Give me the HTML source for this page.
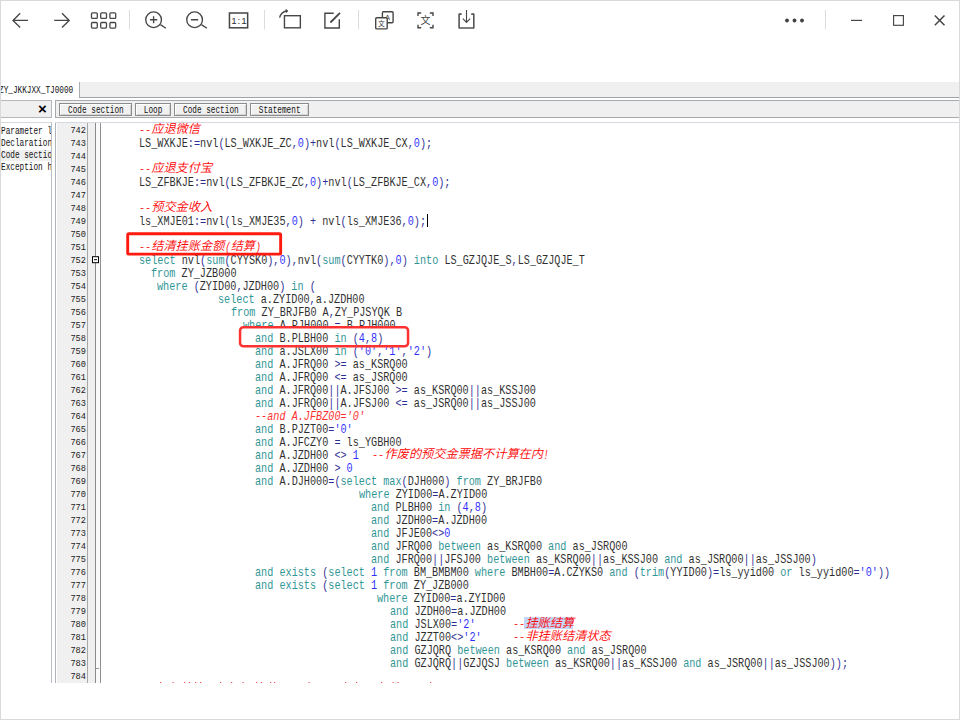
<!DOCTYPE html>
<html lang="zh-CN">
<head>
<meta charset="utf-8">
<title>ZY_JKKJXX_TJ0000</title>
<style>
html,body{margin:0;padding:0;background:#fff;}
body{width:960px;height:720px;position:relative;overflow:hidden;font-family:"Liberation Mono","Noto Serif CJK SC",monospace;color:#000;}
#frame{position:absolute;left:0;top:0;width:958px;height:718px;border:1px solid #d9d9d9;pointer-events:none;z-index:50;}
#tb{position:absolute;left:0;top:0;}
/* tab strip */
#tabbg{position:absolute;left:79px;top:82px;width:880px;height:16px;background:#f0f0f0;border-left:1px solid #a9adb3;border-bottom:1px solid #a0a3a8;box-sizing:border-box;}
#tabtxt{position:absolute;left:-0.9px;top:85.2px;height:12px;line-height:12px;font-size:10px;white-space:pre;transform:scaleX(.773);transform-origin:0 0;color:#111;}
/* second strip */
#xbar{position:absolute;left:0;top:100px;width:52px;height:18px;box-sizing:border-box;background:#f0f0f0;border:1px solid #b4b7bc;border-left:none;}
#xbar span{position:absolute;left:36.5px;top:-0.7px;width:12px;text-align:center;font:bold 15px/18px "Liberation Sans",sans-serif;color:#000;}
#crumb{position:absolute;left:55px;top:100px;width:904px;height:18px;box-sizing:border-box;background:#f0f0f0;border:1px solid #a6a9ae;border-right:none;}
.btn{position:absolute;top:2px;height:13px;box-sizing:border-box;border:1px solid #8c8c8c;background:#f1f1f1;box-shadow:inset 1px 1px 0 #fff, inset -1px -1px 0 #d4d4d4;}
.btn span{position:absolute;left:0;width:100%;text-align:center;top:1.2px;height:11px;line-height:11px;font-size:10px;white-space:pre;transform:scaleX(.773);transform-origin:50% 0;color:#111;}
/* left list */
#left{position:absolute;left:0;top:122px;width:52px;height:561px;box-sizing:border-box;border-top:1px solid #d5d8de;border-right:1px solid #b9bdc6;background:#fff;overflow:hidden;}
#left div{position:absolute;left:1px;height:12px;line-height:12px;font-size:10px;white-space:pre;transform:scaleX(.773);transform-origin:0 0;color:#111;}
#left .sel{left:0;width:51px;height:11px;top:27px;background:#efefef;transform:none;}
/* editor */
#ed{position:absolute;left:55px;top:122px;width:904px;height:561px;box-sizing:border-box;border-top:1px solid #d5d8de;overflow:hidden;background:#fff;}
#gut{position:absolute;left:0;top:0;width:33px;height:561px;box-sizing:border-box;border-left:1px solid #aeb2bb;border-right:1px solid #a8a8a8;background:linear-gradient(90deg,#fff 0,#fff 1px,#f0f0f0 1px);}
#fold{position:absolute;left:33px;top:0;width:13px;height:561px;box-sizing:border-box;background:linear-gradient(90deg,#f0f0f0 0,#f0f0f0 7px,#8a8a8a 7px,#8a8a8a 8px,#fafafa 8px,#fafafa 12px,#8e8e8e 12px);}
.num{position:absolute;left:-39.4px;width:70px;height:13px;line-height:13px;font-size:9.8px;text-align:right;color:#222;transform:scaleX(.884);transform-origin:100% 0;}
#code{position:absolute;left:0;top:0;width:960px;height:683px;overflow:hidden;}
.ln{position:absolute;left:139px;height:13px;line-height:13px;font-size:12.4px;white-space:pre;}
.ln.top{z-index:12;}
.r{position:absolute;top:1.9px;opacity:.82;transform:scaleX(0.8212);transform-origin:0 0;}
.z{position:absolute;top:-1.1px;font-family:"Noto Sans CJK SC","Noto Serif CJK SC",sans-serif;font-style:italic;font-weight:350;color:#f00;font-size:12.2px;}
.c{font-style:italic;color:#f00;}
.k{color:#008080;}
.o{color:#000080;}
.n,.s{color:#00f;}
.box{position:absolute;box-sizing:border-box;background:#fff;z-index:10;}
#hl{position:absolute;left:524.4px;top:616.9px;width:48.7px;height:12.5px;background:#c6d6f6;}
#caret{position:absolute;left:426.6px;top:214.2px;width:1.3px;height:12.6px;background:#000;}
</style>
</head>
<body>
<svg id="tb" width="960" height="60" viewBox="0 0 960 60" fill="none" stroke="#464646" stroke-width="1.35" stroke-linecap="butt" stroke-linejoin="miter">
<!-- back / forward -->
<path d="M28 20.4H13.2M20.2 13.3L13 20.4L20.2 27.5"/>
<path d="M54.2 20.4H69M62 13.3L69.2 20.4L62 27.5"/>
<!-- grid -->
<g stroke-width="1.3"><rect x="91.5" y="12.8" width="5.8" height="5.6" rx="1"/><rect x="100.7" y="12.8" width="5.8" height="5.6" rx="1"/><rect x="109.9" y="12.8" width="5.8" height="5.6" rx="1"/><rect x="91.5" y="22.5" width="5.8" height="5.6" rx="1"/><rect x="100.7" y="22.5" width="5.8" height="5.6" rx="1"/><rect x="109.9" y="22.5" width="5.8" height="5.6" rx="1"/></g>
<path d="M129.5 10V29.6" stroke="#dcdcdc" stroke-width="1"/>
<!-- zoom in -->
<circle cx="153.6" cy="19.75" r="7.85"/><path d="M160.4 24.6L165.9 28.2M150 19.75H157.2M153.6 16.2V23.3"/>
<!-- zoom out -->
<circle cx="194.6" cy="19.75" r="7.85"/><path d="M201.4 24.6L206.9 28.2M191 19.75H198.2"/>
<!-- 1:1 -->
<rect x="229.45" y="13" width="18.2" height="14.8" stroke-width="1.5"/><text x="231.2" y="24" style="font-family:'Liberation Sans',sans-serif;font-size:9.8px;letter-spacing:0.9px" fill="#333" stroke="none">1:1</text>
<path d="M264.5 10V29.6" stroke="#dcdcdc" stroke-width="1"/>
<!-- rotate -->
<rect x="284.45" y="15.7" width="15.9" height="12.1" stroke-width="1.4"/><path d="M279.6 17.7C280.6 14 283 11.6 286.6 11" stroke-width="1.3"/><path d="M285.9 9.5L288 10.9L286.1 12.5Z" fill="#414141" stroke-width=".7"/>
<!-- edit -->
<path d="M333.7 13.2H324.9V28.05H339.3V19.2" stroke-width="1.4"/><path d="M330.4 22.5L340 12.9" stroke-width="1.8"/>
<path d="M358.5 10V29.6" stroke="#dcdcdc" stroke-width="1"/>
<!-- translate -->
<rect x="382.4" y="11.7" width="10.7" height="11.1" rx="1" stroke-width="1.4"/>
<text x="387.5" y="20.4" style="font-family:'Liberation Sans',sans-serif" font-size="7.5" fill="#414141" stroke="none" text-anchor="middle">A</text>
<rect x="375.7" y="17.8" width="11.5" height="11.1" rx="1" fill="#fff" stroke-width="1.4"/>
<text x="381.45" y="26" style="font-family:'Noto Sans CJK SC',sans-serif" font-size="6.8" fill="#414141" stroke="none" text-anchor="middle">文</text>
<!-- ocr -->
<path d="M418 16V13H421.2M429.8 13H433V16M433 24.8V27.8H429.8M421.2 27.8H418V24.8" stroke-width="1.4"/>
<text x="425.4" y="24.3" style="font-family:'Noto Sans CJK SC',sans-serif" font-size="10" fill="#414141" stroke="none" text-anchor="middle">文</text>
<!-- download -->
<path d="M461.7 14.1H459.1V27.95H473.8V14.1H471.2" stroke-width="1.6" stroke="#555" stroke-linejoin="round"/><path d="M466.5 10V22.2M462.9 18.7L466.5 22.4L470.1 18.7" stroke-width="1.1"/>
<!-- more -->
<g fill="#414141" stroke="none"><circle cx="787" cy="20.5" r="1.9"/><circle cx="794.5" cy="20.5" r="1.9"/><circle cx="802" cy="20.5" r="1.9"/></g>
<path d="M825.5 10V29.6" stroke="#dcdcdc" stroke-width="1"/>
<!-- min / max / close -->
<path d="M851 20.4H862" stroke-width="1.2"/>
<rect x="893.6" y="15.6" width="9.8" height="9.7" stroke-width="1.15"/>
<path d="M934.8 15.5L944.5 25.3M944.5 15.5L934.8 25.3" stroke-width="1.5"/>

</svg>

<div id="tabbg"></div>
<div id="tabtxt">ZY_JKKJXX_TJ0000</div>

<div id="xbar"><span>×</span></div>
<div id="crumb">
<div class="btn" style="left:3.2px;width:73.3px"><span>Code section</span></div>
<div class="btn" style="left:79.2px;width:36.2px"><span>Loop</span></div>
<div class="btn" style="left:118.2px;width:72.5px"><span>Code section</span></div>
<div class="btn" style="left:193.5px;width:59.3px"><span>Statement</span></div>
</div>

<div id="left">
<div class="sel"></div>
<div style="top:2.6px">Parameter l</div>
<div style="top:14.9px">Declaration</div>
<div style="top:27.2px">Code sectio</div>
<div style="top:39.4px">Exception h</div>
</div>

<div id="ed">
<div id="gut"></div>
<div id="fold">
<svg width="13" height="561" viewBox="0 0 13 561" style="position:absolute;left:0;top:0"><rect x="4.5" y="133.7" width="6" height="6" fill="#fff" stroke="#000" stroke-width="1"/><path d="M6 136.7H9" stroke="#000" stroke-width="1"/><path d="M8 545.5H11" stroke="#9a9a9a" stroke-width="1"/></svg>
</div>
</div>

<div id="code">
<div id="nums" style="position:absolute;left:55px;top:0;width:33px;height:683px;">
<div class="num" style="top:124.30px">742</div>
<div class="num" style="top:137.29px">743</div>
<div class="num" style="top:150.28px">744</div>
<div class="num" style="top:163.27px">745</div>
<div class="num" style="top:176.26px">746</div>
<div class="num" style="top:189.25px">747</div>
<div class="num" style="top:202.24px">748</div>
<div class="num" style="top:215.23px">749</div>
<div class="num" style="top:228.22px">750</div>
<div class="num" style="top:241.21px">751</div>
<div class="num" style="top:254.20px">752</div>
<div class="num" style="top:267.19px">753</div>
<div class="num" style="top:280.18px">754</div>
<div class="num" style="top:293.17px">755</div>
<div class="num" style="top:306.16px">756</div>
<div class="num" style="top:319.15px">757</div>
<div class="num" style="top:332.14px">758</div>
<div class="num" style="top:345.13px">759</div>
<div class="num" style="top:358.12px">760</div>
<div class="num" style="top:371.11px">761</div>
<div class="num" style="top:384.10px">762</div>
<div class="num" style="top:397.09px">763</div>
<div class="num" style="top:410.08px">764</div>
<div class="num" style="top:423.07px">765</div>
<div class="num" style="top:436.06px">766</div>
<div class="num" style="top:449.05px">767</div>
<div class="num" style="top:462.04px">768</div>
<div class="num" style="top:475.03px">769</div>
<div class="num" style="top:488.02px">770</div>
<div class="num" style="top:501.01px">771</div>
<div class="num" style="top:514.00px">772</div>
<div class="num" style="top:526.99px">773</div>
<div class="num" style="top:539.98px">774</div>
<div class="num" style="top:552.97px">775</div>
<div class="num" style="top:565.96px">776</div>
<div class="num" style="top:578.95px">777</div>
<div class="num" style="top:591.94px">778</div>
<div class="num" style="top:604.93px">779</div>
<div class="num" style="top:617.92px">780</div>
<div class="num" style="top:630.91px">781</div>
<div class="num" style="top:643.90px">782</div>
<div class="num" style="top:656.89px">783</div>
<div class="num" style="top:669.88px">784</div>
</div>
<div id="hl"></div>
<svg class="box" width="960" height="720" viewBox="0 0 960 720" style="left:0;top:0;background:none">
<rect x="127.7" y="233.7" width="152.95" height="20.45" rx="1.2" fill="#fff" stroke="#ff1a0d" stroke-width="2.9"/>
<rect x="240.05" y="327.15" width="168" height="19.2" rx="3.4" fill="#fff" stroke="#ff3232" stroke-width="2.5"/>
</svg>
<div class="ln" style="top:123.40px"><span class="r c" style="left:0.00px">--</span><span class="z" style="left:12.22px">应退微信</span></div>
<div class="ln" style="top:136.39px"><span class="r" style="left:0.00px">LS_WXKJE<span class="o">:=</span>nvl<span class="o">(</span>LS_WXKJE_ZC<span class="o">,</span><span class="n">0</span><span class="o">)+</span>nvl<span class="o">(</span>LS_WXKJE_CX<span class="o">,</span><span class="n">0</span><span class="o">);</span></span></div>
<div class="ln" style="top:162.37px"><span class="r c" style="left:0.00px">--</span><span class="z" style="left:12.22px">应退支付宝</span></div>
<div class="ln" style="top:175.36px"><span class="r" style="left:0.00px">LS_ZFBKJE<span class="o">:=</span>nvl<span class="o">(</span>LS_ZFBKJE_ZC<span class="o">,</span><span class="n">0</span><span class="o">)+</span>nvl<span class="o">(</span>LS_ZFBKJE_CX<span class="o">,</span><span class="n">0</span><span class="o">);</span></span></div>
<div class="ln" style="top:201.34px"><span class="r c" style="left:0.00px">--</span><span class="z" style="left:12.22px">预交金收入</span></div>
<div class="ln" style="top:214.33px"><span class="r" style="left:0.00px">ls_XMJE01<span class="o">:=</span>nvl<span class="o">(</span>ls_XMJE35<span class="o">,</span><span class="n">0</span><span class="o">)</span> <span class="o">+</span> nvl<span class="o">(</span>ls_XMJE36<span class="o">,</span><span class="n">0</span><span class="o">);</span></span></div>
<div class="ln top" style="top:240.31px"><span class="r c" style="left:0.00px">--</span><span class="z" style="left:12.22px">结清挂账金额</span><span class="r c" style="left:85.54px">(</span><span class="z" style="left:91.65px">结算</span><span class="r c" style="left:116.09px">)</span></div>
<div class="ln" style="top:253.30px"><span class="r" style="left:0.00px"><span class="k">select</span> nvl<span class="o">(</span><span class="k">sum</span><span class="o">(</span>CYYSK0<span class="o">),</span><span class="n">0</span><span class="o">),</span>nvl<span class="o">(</span><span class="k">sum</span><span class="o">(</span>CYYTK0<span class="o">),</span><span class="n">0</span><span class="o">)</span> <span class="k">into</span> LS_GZJQJE_S<span class="o">,</span>LS_GZJQJE_T</span></div>
<div class="ln" style="top:266.29px"><span class="r" style="left:12.22px"><span class="k">from</span> ZY_JZB000</span></div>
<div class="ln" style="top:279.28px"><span class="r" style="left:18.33px"><span class="k">where</span> <span class="o">(</span>ZYID00<span class="o">,</span>JZDH00<span class="o">)</span> <span class="k">in</span> <span class="o">(</span></span></div>
<div class="ln" style="top:292.27px"><span class="r" style="left:79.43px"><span class="k">select</span> a.ZYID00<span class="o">,</span>a.JZDH00</span></div>
<div class="ln" style="top:305.26px"><span class="r" style="left:91.65px"><span class="k">from</span> ZY_BRJFB0 A<span class="o">,</span>ZY_PJSYQK B</span></div>
<div class="ln" style="top:318.25px"><span class="r" style="left:103.87px"><span class="k">where</span> A.PJH000 <span class="o">=</span> B.PJH000</span></div>
<div class="ln top" style="top:331.24px"><span class="r" style="left:116.09px"><span class="k">and</span> B.PLBH00 <span class="k">in</span> <span class="o">(</span><span class="n">4</span><span class="o">,</span><span class="n">8</span><span class="o">)</span></span></div>
<div class="ln" style="top:344.23px"><span class="r" style="left:116.09px"><span class="k">and</span> a.JSLX00 <span class="k">in</span> <span class="o">(</span><span class="s">'0'</span><span class="o">,</span><span class="s">'1'</span><span class="o">,</span><span class="s">'2'</span><span class="o">)</span></span></div>
<div class="ln" style="top:357.22px"><span class="r" style="left:116.09px"><span class="k">and</span> A.JFRQ00 <span class="o">&gt;=</span> as_KSRQ00</span></div>
<div class="ln" style="top:370.21px"><span class="r" style="left:116.09px"><span class="k">and</span> A.JFRQ00 <span class="o">&lt;=</span> as_JSRQ00</span></div>
<div class="ln" style="top:383.20px"><span class="r" style="left:116.09px"><span class="k">and</span> A.JFRQ00<span class="o">||</span>A.JFSJ00 <span class="o">&gt;=</span> as_KSRQ00<span class="o">||</span>as_KSSJ00</span></div>
<div class="ln" style="top:396.19px"><span class="r" style="left:116.09px"><span class="k">and</span> A.JFRQ00<span class="o">||</span>A.JFSJ00 <span class="o">&lt;=</span> as_JSRQ00<span class="o">||</span>as_JSSJ00</span></div>
<div class="ln" style="top:409.18px"><span class="r c" style="left:116.09px">--and A.JFBZ00='0'</span></div>
<div class="ln" style="top:422.17px"><span class="r" style="left:116.09px"><span class="k">and</span> B.PJZT00<span class="o">=</span><span class="s">'0'</span></span></div>
<div class="ln" style="top:435.16px"><span class="r" style="left:116.09px"><span class="k">and</span> A.JFCZY0 <span class="o">=</span> ls_YGBH00</span></div>
<div class="ln" style="top:448.15px"><span class="r" style="left:116.09px"><span class="k">and</span> A.JZDH00 <span class="o">&lt;&gt;</span> <span class="n">1</span></span><span class="r c" style="left:233.30px">--</span><span class="z" style="left:245.52px">作废的预交金票据不计算在内</span><span class="r c" style="left:404.38px">!</span></div>
<div class="ln" style="top:461.14px"><span class="r" style="left:116.09px"><span class="k">and</span> A.JZDH00 <span class="o">&gt;</span> <span class="n">0</span></span></div>
<div class="ln" style="top:474.13px"><span class="r" style="left:116.09px"><span class="k">and</span> A.DJH000<span class="o">=(</span><span class="k">select</span> <span class="k">max</span><span class="o">(</span>DJH000<span class="o">)</span> <span class="k">from</span> ZY_BRJFB0</span></div>
<div class="ln" style="top:487.12px"><span class="r" style="left:219.96px"><span class="k">where</span> ZYID00<span class="o">=</span>A.ZYID00</span></div>
<div class="ln" style="top:500.11px"><span class="r" style="left:232.18px"><span class="k">and</span> PLBH00 <span class="k">in</span> <span class="o">(</span><span class="n">4</span><span class="o">,</span><span class="n">8</span><span class="o">)</span></span></div>
<div class="ln" style="top:513.10px"><span class="r" style="left:232.18px"><span class="k">and</span> JZDH00<span class="o">=</span>A.JZDH00</span></div>
<div class="ln" style="top:526.09px"><span class="r" style="left:232.18px"><span class="k">and</span> JFJE00<span class="o">&lt;&gt;</span><span class="n">0</span></span></div>
<div class="ln" style="top:539.08px"><span class="r" style="left:232.18px"><span class="k">and</span> JFRQ00 <span class="k">between</span> as_KSRQ00 <span class="k">and</span> as_JSRQ00</span></div>
<div class="ln" style="top:552.07px"><span class="r" style="left:232.18px"><span class="k">and</span> JFRQ00<span class="o">||</span>JFSJ00 <span class="k">between</span> as_KSRQ00<span class="o">||</span>as_KSSJ00 <span class="k">and</span> as_JSRQ00<span class="o">||</span>as_JSSJ00<span class="o">)</span></span></div>
<div class="ln" style="top:565.06px"><span class="r" style="left:116.09px"><span class="k">and</span> <span class="k">exists</span> <span class="o">(</span><span class="k">select</span> <span class="n">1</span> <span class="k">from</span> BM_BMBM00 <span class="k">where</span> BMBH00<span class="o">=</span>A.CZYKS0 <span class="k">and</span> <span class="o">(</span><span class="k">trim</span><span class="o">(</span>YYID00<span class="o">)=</span>ls_yyid00 <span class="k">or</span> ls_yyid00<span class="o">=</span><span class="s">'0'</span><span class="o">))</span></span></div>
<div class="ln" style="top:578.05px"><span class="r" style="left:116.09px"><span class="k">and</span> <span class="k">exists</span> <span class="o">(</span><span class="k">select</span> <span class="n">1</span> <span class="k">from</span> ZY_JZB000</span></div>
<div class="ln" style="top:591.04px"><span class="r" style="left:238.29px"><span class="k">where</span> ZYID00<span class="o">=</span>a.ZYID00</span></div>
<div class="ln" style="top:604.03px"><span class="r" style="left:250.51px"><span class="k">and</span> JZDH00<span class="o">=</span>a.JZDH00</span></div>
<div class="ln" style="top:617.02px"><span class="r" style="left:250.51px"><span class="k">and</span> JSLX00<span class="o">=</span><span class="s">'2'</span></span><span class="r c" style="left:374.20px">--</span><span class="z" style="left:386.42px">挂账结算</span></div>
<div class="ln" style="top:630.01px"><span class="r" style="left:250.51px"><span class="k">and</span> JZZT00<span class="o">&lt;&gt;</span><span class="s">'2'</span></span><span class="r c" style="left:374.20px">--</span><span class="z" style="left:386.42px">非挂账结清状态</span></div>
<div class="ln" style="top:643.00px"><span class="r" style="left:250.51px"><span class="k">and</span> GZJQRQ <span class="k">between</span> as_KSRQ00 <span class="k">and</span> as_JSRQ00</span></div>
<div class="ln" style="top:655.99px"><span class="r" style="left:250.51px"><span class="k">and</span> GZJQRQ<span class="o">||</span>GZJQSJ <span class="k">between</span> as_KSRQ00<span class="o">||</span>as_KSSJ00 <span class="k">and</span> as_JSRQ00<span class="o">||</span>as_JSSJ00<span class="o">));</span></span></div>
<div id="caret"></div>
<svg width="960" height="684" viewBox="0 0 960 684" style="position:absolute;left:0;top:0"><path d="M160.0 682.5h1.2M172.5 682.5h1.2M184.0 682.5h1.2M189.0 682.5h1.2M195.0 682.5h1.2M200.0 682.5h1.2M220.0 682.5h1.2M231.0 682.5h1.2M242.5 682.5h1.2M256.0 682.5h1.2M261.0 682.5h1.2M270.0 682.5h1.2M274.0 682.5h1.2M308.5 682.5h1.2M345.0 682.5h1.2M356.0 682.5h1.2M381.0 682.5h1.2M392.5 682.5h1.2M397.5 682.5h1.2M430.0 682.5h1.2" stroke="#ff4a4a" stroke-width="1" fill="none"/></svg>
</div>

<div id="frame"></div>
</body>
</html>
